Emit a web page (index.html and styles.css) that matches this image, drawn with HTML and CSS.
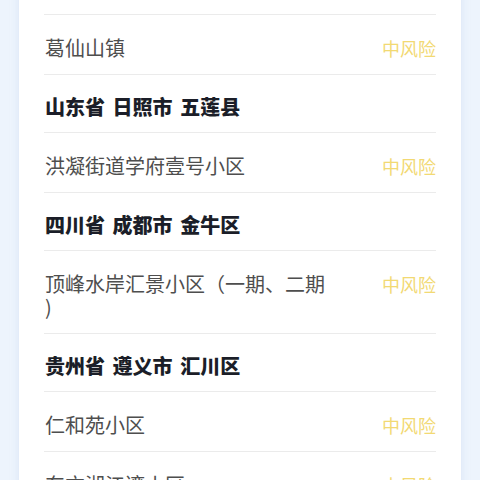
FILE: index.html
```html
<!DOCTYPE html>
<html lang="zh-CN">
<head>
    <meta charset="UTF-8">
    <meta name="viewport" content="width=device-width, initial-scale=1.0">
    <title>风险地区</title>
    <link rel="stylesheet" href="styles.css">
</head>
<body>
    <div class="card">
        <ul class="areaList">
            <li class="row">
                <span class="name">江西省吉安市青原区河东街道滨江社区及周边</span>
                <span class="risk">中风险</span>
            </li>
            <li class="row">
                <span class="name">葛仙山镇</span>
                <span class="risk">中风险</span>
            </li>
            <li class="row heading">山东省 日照市 五莲县</li>
            <li class="row">
                <span class="name">洪凝街道学府壹号小区</span>
                <span class="risk">中风险</span>
            </li>
            <li class="row heading">四川省 成都市 金牛区</li>
            <li class="row">
                <span class="name">顶峰水岸汇景小区（一期、二期)</span>
                <span class="risk">中风险</span>
            </li>
            <li class="row heading">贵州省 遵义市 汇川区</li>
            <li class="row">
                <span class="name">仁和苑小区</span>
                <span class="risk">中风险</span>
            </li>
            <li class="row">
                <span class="name">东方湘江湾小区</span>
                <span class="risk">中风险</span>
            </li>
        </ul>
    </div>
</body>
</html>
```

FILE: styles.css
```css
body {
    margin: 0;
    background-color: #edf4fd;
    font-family: "Noto Sans CJK SC", "Noto Sans", sans-serif;
    overflow: hidden;
}
.card {
    margin: -68px 19px 0;
    padding: 0 25px;
    background-color: #fff;
    box-shadow: 0 0 8px rgba(180, 200, 225, 0.35);
}
.areaList {
    list-style-type: none;
    margin: 0;
    padding: 0;
}
.row {
    display: flex;
    align-items: flex-start;
    padding: 21px 0 15px;
    border-bottom: 1px solid #ebebeb;
    line-height: 23px;
}
.name {
    flex: 1;
    max-width: 284px;
    font-size: 20px;
    color: #4e4e4e;
    padding-left: 1px;
    line-break: anywhere;
}
.risk {
    margin: 1px 0 -1px auto;
    font-size: 18px;
    color: #f2d973;
}
.heading {
    padding: 20px 0 14px 1px;
    font-size: 20px;
    font-weight: 900;
    word-spacing: 3px;
    color: #1b1e28;
}
```
